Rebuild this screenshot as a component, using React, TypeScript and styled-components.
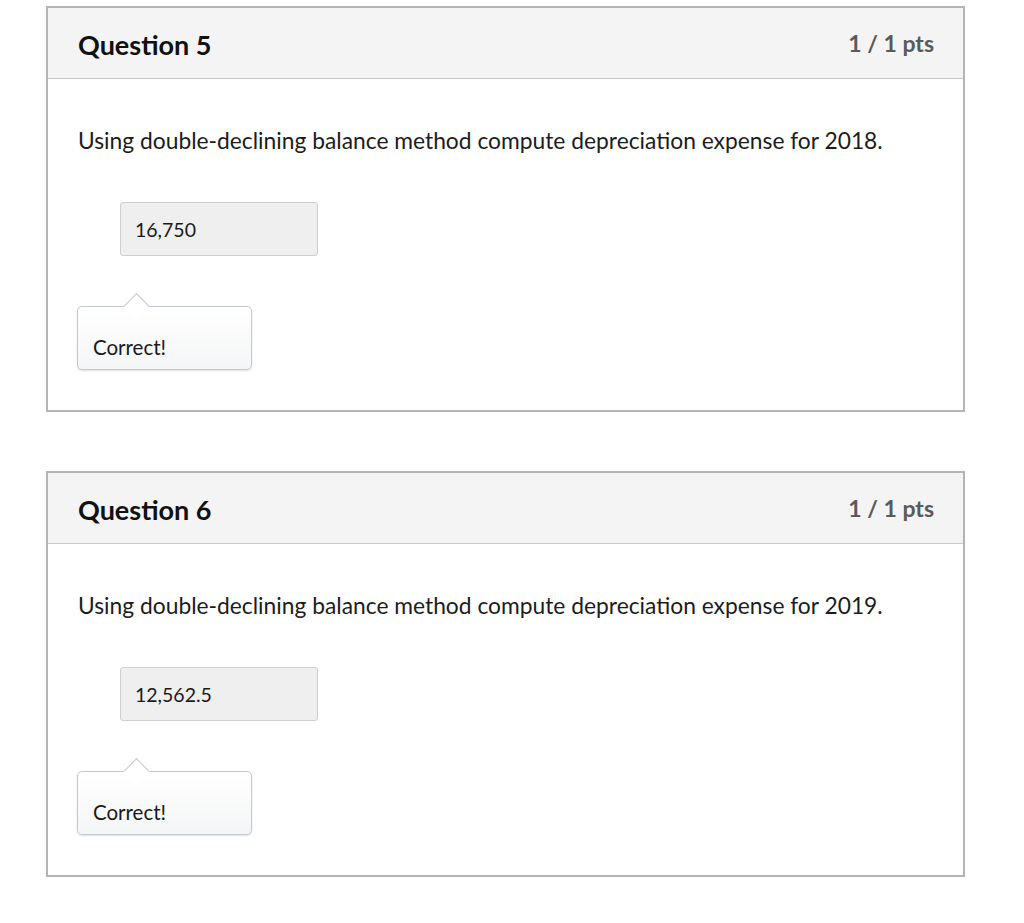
import styled, { createGlobalStyle } from 'styled-components';

const GlobalStyle = createGlobalStyle`
  body {
    margin: 0;
    background: #fff;
    font-family: Lato, "Open Sans", "Liberation Sans", sans-serif;
    color: #1f1f1f;
  }
`;

const Page = styled.div`
  display: flex;
  flex-direction: column;
  gap: 59px;
  padding: 6px 0 0 46px;
  width: 919px;
`;

const Card = styled.section`
  border: 2px solid #b4b4b4;
  background: #fff;
`;

const Header = styled.header`
  display: flex;
  justify-content: space-between;
  align-items: center;
  height: 71px;
  padding: 0 29px 0 30px;
  background: #f4f4f4;
  border-bottom: 1px solid #c7c7c7;
  box-sizing: border-box;
`;

const Title = styled.h2`
  margin: 0;
  padding-top: 3px;
  font-size: 27px;
  font-weight: 700;
  color: #111;
`;

const Points = styled.span`
  font-size: 23px;
  font-weight: 700;
  color: #5a5a5a;
`;

const Body = styled.div`
  padding: 46px 30px 40px;
`;

const QuestionText = styled.p`
  margin: 0;
  font-size: 22.8px;
  line-height: 30px;
  color: #1c1c1c;
`;

const AnswerBox = styled.div`
  margin: 47px 0 0 42px;
  width: 198px;
  height: 54px;
  box-sizing: border-box;
  padding: 0 14px;
  display: flex;
  align-items: center;
  background: #efefef;
  border: 1px solid #cfcfcf;
  border-radius: 3px;
  font-size: 19.5px;
  color: #1a1a1a;
`;

const Feedback = styled.div`
  position: relative;
  margin: 50px 0 0 -1px;
  width: 175px;
  height: 64px;
  box-sizing: border-box;
  padding: 0 15px 8px;
  display: flex;
  align-items: flex-end;
  background: linear-gradient(#ffffff, #f4f5f6);
  border: 1px solid #c3c8ce;
  border-radius: 5px;
  box-shadow: 0 1px 2px rgba(0, 0, 0, 0.12);
  font-size: 20.5px;
  line-height: 28px;
  color: #1a1a1a;

  &::before {
    content: '';
    position: absolute;
    left: 49px;
    top: -10px;
    width: 18px;
    height: 18px;
    background: #fff;
    border-left: 1px solid #c3c8ce;
    border-top: 1px solid #c3c8ce;
    transform: rotate(45deg);
  }
`;

const questions = [
  { n: 5, year: 2018, answer: '16,750' },
  { n: 6, year: 2019, answer: '12,562.5' },
];

export default function App() {
  return (
    <>
      <GlobalStyle />
      <Page>
        {questions.map((q) => (
          <Card key={q.n}>
            <Header>
              <Title>Question {q.n}</Title>
              <Points>1 / 1 pts</Points>
            </Header>
            <Body>
              <QuestionText>
                Using double-declining balance method compute depreciation expense for {q.year}.
              </QuestionText>
              <AnswerBox>{q.answer}</AnswerBox>
              <Feedback>Correct!</Feedback>
            </Body>
          </Card>
        ))}
      </Page>
    </>
  );
}
